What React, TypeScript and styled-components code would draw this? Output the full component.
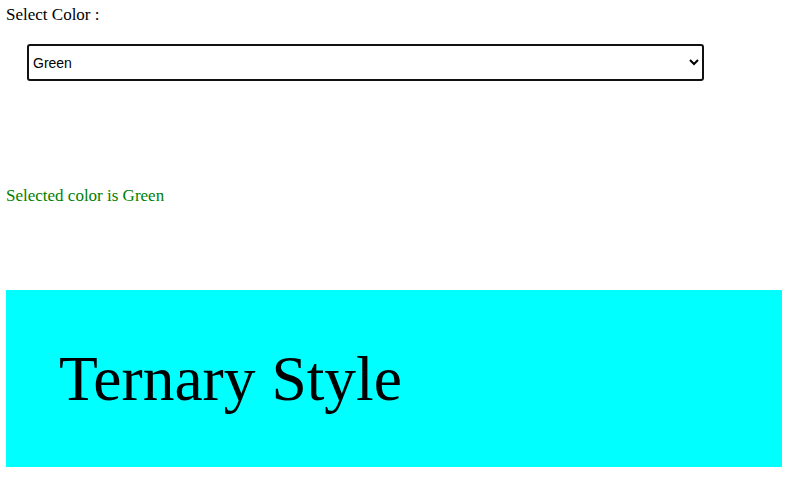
import { useState } from 'react';
import styled, { createGlobalStyle } from 'styled-components';

const GlobalStyle = createGlobalStyle`
  body {
    margin: 6px;
    background: #fff;
    font-family: 'Liberation Serif', 'Times New Roman', serif;
  }
`;

const colorMap: Record<string, string> = {
  Red: '#ff0000',
  Green: '#008000',
  Blue: '#0000ff',
};

const App = () => {
  const [color, setColor] = useState<string>('Green');

  return (
    <Page>
      <GlobalStyle />
      <Label htmlFor="color-select">Select Color :</Label>
      <SelectRow>
        <ColorSelect
          id="color-select"
          value={color}
          onChange={(e) => setColor(e.target.value)}
        >
          <option value="Red">Red</option>
          <option value="Green">Green</option>
          <option value="Blue">Blue</option>
        </ColorSelect>
      </SelectRow>
      <Message $color={colorMap[color]}>Selected color is {color}</Message>
      <Banner $active={color === 'Green'}>
        <BannerTitle>Ternary Style</BannerTitle>
      </Banner>
    </Page>
  );
};

export default App;

const Page = styled.div`
  display: flex;
  flex-direction: column;
`;

const Label = styled.label`
  display: block;
  font-size: 17px;
  line-height: 18px;
  color: #000;
`;

const SelectRow = styled.div`
  display: flex;
  margin-top: 20px;
  padding-left: 21px;
`;

const ColorSelect = styled.select`
  width: 677px;
  height: 37px;
  padding: 0;
  border: 2px solid #111;
  border-radius: 3px;
  background: #fff;
  font-family: 'Liberation Sans', Arial, sans-serif;
  font-size: 14px;
  color: #000;
`;

const Message = styled.p<{ $color: string }>`
  margin: 106px 0 0;
  font-size: 17px;
  line-height: 18px;
  color: ${({ $color }) => $color};
`;

const Banner = styled.div<{ $active: boolean }>`
  display: flex;
  align-items: center;
  width: 776px;
  height: 177px;
  margin-top: 85px;
  padding-left: 53px;
  box-sizing: border-box;
  background: ${({ $active }) => ($active ? '#00ffff' : '#ffd700')};
`;

const BannerTitle = styled.h1`
  margin: 0;
  font-size: 63.5px;
  font-weight: 400;
  color: #000;
`;
